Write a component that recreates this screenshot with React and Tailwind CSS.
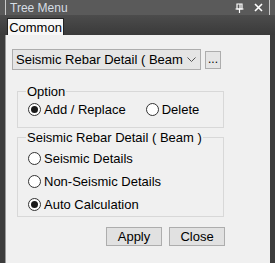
import { useState } from 'react'

const font = { fontFamily: '"Liberation Sans", "Noto Sans CJK KR", sans-serif' }

function Radio({ checked, label, onClick }) {
  return (
    <button onClick={onClick} className="flex items-center gap-[3px] text-[13px] text-black leading-none">
      <span className="w-[13px] h-[13px] rounded-full border border-[#333] bg-white flex items-center justify-center">
        {checked && <span className="w-[7px] h-[7px] rounded-full bg-[#1a1a1a]" />}
      </span>
      <span>{label}</span>
    </button>
  )
}

function Group({ title, children, className = '' }) {
  return (
    <fieldset className={`border border-[#d8d8d8] ml-[11px] w-[207px] px-[10px] ${className}`}>
      <legend className="px-[1px] ml-[-2px] text-[13px] text-black leading-none">{title}</legend>
      {children}
    </fieldset>
  )
}

export default function App() {
  const [option, setOption] = useState('add')
  const [detail, setDetail] = useState('auto')

  return (
    <div className="w-[275px] h-[263px] bg-[#3c3c3c] flex flex-col overflow-hidden" style={font}>
      {/* title bar */}
      <div className="h-[15px] bg-[#5a5a5a] flex items-center px-[5px]">
        <div className="h-full flex-1 border-x border-[#c8c8c8] flex items-center pl-[4px] pr-[6px]">
          <span className="text-[12px] text-[#d6dde4] leading-none">Tree Menu</span>
          <span className="flex-1" />
          <svg width="9" height="10" viewBox="0 0 9 10" className="mr-[10px]">
            <path d="M2 1h5v5H2z" fill="none" stroke="#fff" strokeWidth="1.2" />
            <path d="M5 1v5M0.5 6h8M4.5 6v4" stroke="#fff" strokeWidth="1.2" />
          </svg>
          <svg width="9" height="9" viewBox="0 0 9 9">
            <path d="M1 1l7 7M8 1l-7 7" stroke="#fff" strokeWidth="1.6" />
          </svg>
        </div>
      </div>

      {/* tab strip */}
      <div className="h-[20px] bg-gradient-to-b from-[#4c4c4c] to-[#3a3a3a] flex items-end px-[5px]">
        <div className="ml-[2px] h-[17px] w-[57px] bg-[#f7f7f7] border-l border-t border-r border-[#222] flex items-center justify-center text-[13px] text-black leading-none">
          Common
        </div>
      </div>

      {/* content */}
      <div className="flex-1 mx-[5px] bg-[#f0f0f0] border-l border-[#9a9a9a] flex flex-col">
        <div className="flex items-center mt-[14px] ml-[6px]">
          <div className="w-[189px] h-[21px] bg-[#e5e5e5] border border-[#adadad] flex items-center pl-[3px] pr-[4px] text-[13px] text-black leading-none">
            <span className="flex-1 whitespace-nowrap">Seismic Rebar Detail ( Beam</span>
            <svg width="9" height="6" viewBox="0 0 9 6" className="ml-[2px] shrink-0">
              <path d="M0.5 0.5l4 4 4-4" fill="none" stroke="#555" strokeWidth="1" />
            </svg>
          </div>
          <div className="ml-[4px] w-[16px] h-[18px] bg-[#e5e5e5] border border-[#adadad] flex items-end justify-center pb-[3px] text-[12px] leading-none text-black">
            ...
          </div>
        </div>

        <Group title="Option" className="mt-[15px] h-[43px]">
          <div className="flex items-center gap-[20px] mt-[5px]">
            <Radio checked={option === 'add'} label="Add / Replace" onClick={() => setOption('add')} />
            <Radio checked={option === 'delete'} label="Delete" onClick={() => setOption('delete')} />
          </div>
        </Group>

        <Group title="Seismic Rebar Detail ( Beam )" className="mt-[3px] h-[86px]">
          <div className="flex flex-col gap-[10px] mt-[8px]">
            <Radio checked={detail === 'seismic'} label="Seismic Details" onClick={() => setDetail('seismic')} />
            <Radio checked={detail === 'non'} label="Non-Seismic Details" onClick={() => setDetail('non')} />
            <Radio checked={detail === 'auto'} label="Auto Calculation" onClick={() => setDetail('auto')} />
          </div>
        </Group>

        <div className="flex ml-[100px] mt-[10px] gap-[7px]">
          <button className="w-[56px] h-[19px] bg-[#e1e1e1] border border-[#adadad] text-[13px] leading-none text-black">Apply</button>
          <button className="w-[56px] h-[19px] bg-[#e1e1e1] border border-[#adadad] text-[13px] leading-none text-black">Close</button>
        </div>
      </div>
    </div>
  )
}
